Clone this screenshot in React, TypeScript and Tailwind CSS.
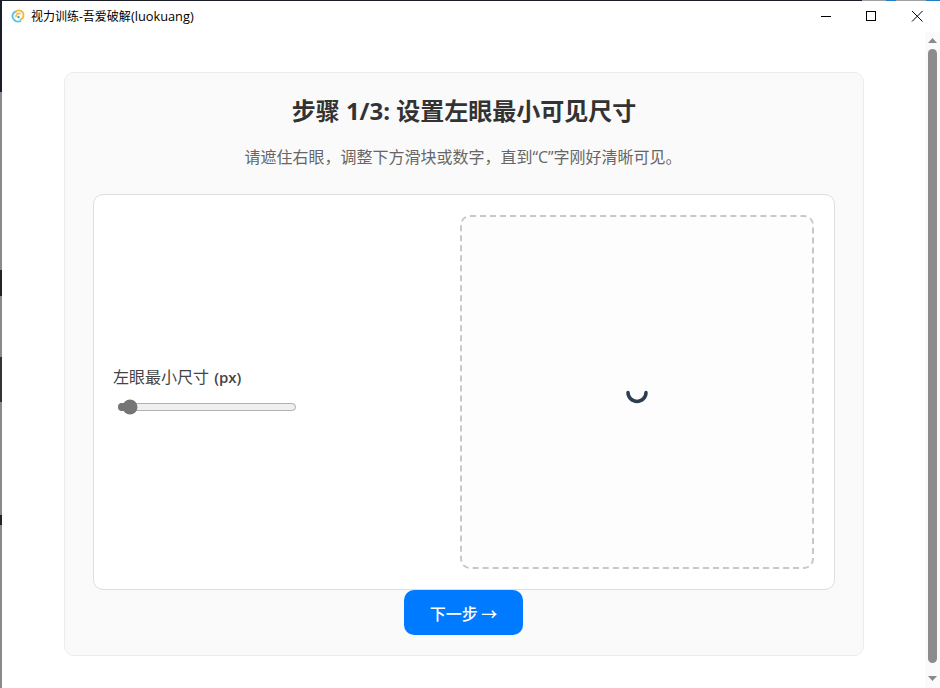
export default function App() {
  const font = { fontFamily: '"Open Sans","Noto Sans CJK SC",sans-serif' };
  return (
    <div className="relative flex h-[688px] w-[940px] flex-col overflow-hidden bg-white" style={font}>
      <div className="absolute left-0 top-0 flex h-px w-[940px]">
        <div className="w-[862px] bg-[#1a1d28]" />
        <div className="w-[24px] bg-[#a0a0a0]" />
        <div className="w-[10px] bg-[#1e7fc4]" />
        <div className="w-[30px] bg-[#a0a0a0]" />
        <div className="w-[14px] bg-[#1e7fc4]" />
      </div>
      <div className="absolute left-0 top-0 flex h-[688px] w-[2px] flex-col bg-[#8a8a8a]">
        <div className="h-[92px] bg-[#1a1d28]" />
        <div className="mt-[178px] h-[26px] bg-[#222]" />
        <div className="mt-[61px] h-[45px] bg-[#333]" />
        <div className="mt-[113px] h-[10px] bg-[#222]" />
      </div>
      <div className="flex h-[32px] shrink-0 items-center">
        <svg width="14" height="14" viewBox="0 0 14 14" className="ml-[11px]" fill="none">
          <path d="M2 9.5C0.5 6 2.5 3 5 2.5" stroke="#4fc3e8" strokeWidth="1.8" strokeLinecap="round" />
          <path d="M5 2.5C8 0 12.5 2 12.5 6C12.5 8.5 11 10 9.5 10.5" stroke="#f5b942" strokeWidth="1.8" strokeLinecap="round" />
          <path d="M3 10.5C4 12.5 7 13 9.5 12" stroke="#4fc3e8" strokeWidth="1.8" strokeLinecap="round" />
          <path d="M9 4.5C6.5 4 5 5.5 5 7.5" stroke="#f5b942" strokeWidth="1.6" strokeLinecap="round" />
          <circle cx="7.5" cy="8" r="1.2" fill="#2aa7d8" />
        </svg>
        <span className="ml-[6px] text-[12px] leading-none text-black">视力训练-吾爱破解<span className="text-[12.8px]">(luokuang)</span></span>
        <div className="ml-auto mr-[3px] flex items-center">
          <svg width="46" height="32" viewBox="0 0 46 32"><path d="M0 16.500H10" transform="translate(22 0)" stroke="#000" /></svg>
          <svg width="46" height="32" viewBox="0 0 46 32"><rect x="21.500" y="11.500" width="9" height="9" fill="none" stroke="#000" /></svg>
          <svg width="46" height="32" viewBox="0 0 46 32"><path d="M21 11L31.500 21.500M31.500 11L21 21.500" stroke="#000" fill="none" /></svg>
        </div>
      </div>
      <div className="flex min-h-0 flex-1">
        <div className="min-w-0 flex-1 pl-[64px] pt-[40px]">
          <div className="flex h-[584px] w-[800px] flex-col rounded-[10px] border border-[#ececec] bg-[#fafafa] px-[28px] pb-[20px]">
            <h1 className="mt-[22px] text-center text-[24px] font-bold leading-[32px] text-[#333]">步骤 1/3: 设置左眼最小可见尺寸</h1>
            <p className="mt-[18px] pr-[2px] text-center text-[16px] leading-[24px] text-[#666]">请遮住右眼，调整下方滑块或数字，直到“C”字刚好清晰可见。</p>
            <div className="mt-[25px] flex h-[396px] items-center rounded-[10px] border border-[#dedede] bg-white p-[20px]">
              <div className="flex-1 pb-[4px]">
                <div className="-ml-px text-[16px] leading-[22px] text-[#444]">左眼最小尺寸 <span className="ml-px text-[15px] font-semibold">(px)</span></div>
                <input type="range" min={0} max={100} defaultValue={3} className="mt-[11px] ml-[3px] block h-[16px] w-[180px] accent-[#757575]" />
              </div>
              <div className="flex h-[354px] w-[354px] items-center justify-center rounded-[10px] border-2 border-dashed border-[#c8c8c8] bg-[#fdfdfd]">
                <svg width="24" height="24" viewBox="0 0 24 24" fill="none">
                  <path d="M3 12.500A9 9 0 0 0 21 12.500" stroke="#2c3e50" strokeWidth="3.500" strokeLinecap="round" />
                </svg>
              </div>
            </div>
            <button className="ml-[311px] h-[45px] w-[119px] rounded-[10px] bg-[#007bff] text-[16px] font-medium text-white" style={{ fontFamily: '"Noto Sans CJK SC",serif' }}>下一步 →</button>
          </div>
        </div>
        <div className="flex w-[15px] shrink-0 flex-col items-center bg-[#fafafa]">
          <svg width="15" height="17" viewBox="0 0 15 17"><path d="M3 11L7.500 6L12 11Z" fill="#8a8a8a" /></svg>
          <div className="w-[9px] flex-1 rounded-full bg-[#8c8c8c]" />
          <svg width="15" height="25" viewBox="0 0 15 25"><path d="M3 13L7.500 18L12 13Z" fill="#8a8a8a" /></svg>
        </div>
      </div>
    </div>
  );
}
